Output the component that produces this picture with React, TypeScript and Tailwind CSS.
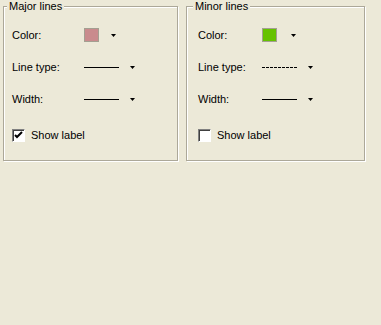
import React from "react";

type BoxProps = {
  title: string;
  width: string;
  pad: string;
  titleLeft: string;
  labelW: string;
  swatch: string;
  swatchArrowGap: string;
  dashed?: boolean;
  checked?: boolean;
};

const Arrow = () => (
  <svg width="5" height="3" viewBox="0 0 5 3" className="block">
    <polygon points="0,0 5,0 2.5,3" fill="#000" />
  </svg>
);

const LineSample = ({ dashed }: { dashed?: boolean }) => (
  <svg width="35" height="1" className="block">
    <line
      x1="0"
      y1="0.5"
      x2="35"
      y2="0.5"
      stroke="#000"
      strokeWidth="1"
      strokeDasharray={dashed ? "3 1" : undefined}
    />
  </svg>
);

const Checkbox = ({ checked }: { checked?: boolean }) => (
  <div className="w-[13px] h-[13px] bg-white border-t border-l border-[#808080] border-b border-r border-b-white border-r-white shadow-[inset_1px_1px_0_#404040] flex items-center justify-center">
    {checked && (
      <svg width="9" height="9" viewBox="0 0 9 9" className="block">
        <polyline points="1,4 3,6 8,1" fill="none" stroke="#000" strokeWidth="2" />
      </svg>
    )}
  </div>
);

const GroupBox = ({ title, width, pad, titleLeft, labelW, swatch, swatchArrowGap, dashed, checked }: BoxProps) => (
  <div
    className={`relative h-[155px] border border-[#aca899] shadow-[1px_1px_0_#fff,inset_1px_1px_0_#fff] ${width}`}
  >
    <span className={`absolute top-[-8px] bg-[#ece9d8] px-[2px] leading-[14px] ${titleLeft}`}>{title}</span>
    <div className={`pt-[12px] ${pad}`}>
      <div className="flex items-center h-8">
        <span className={labelW}>Color:</span>
        <div className="w-[15px] h-[14px] border border-[#a39f91]" style={{ backgroundColor: swatch }} />
        <div className={swatchArrowGap}>
          <Arrow />
        </div>
      </div>
      <div className="flex items-center h-8">
        <span className={labelW}>Line type:</span>
        <LineSample dashed={dashed} />
        <div className="ml-[11px]">
          <Arrow />
        </div>
      </div>
      <div className="flex items-center h-8">
        <span className={labelW}>Width:</span>
        <LineSample />
        <div className="ml-[11px]">
          <Arrow />
        </div>
      </div>
      <div className="flex items-center gap-[6px] mt-[13px] h-[14px]">
        <Checkbox checked={checked} />
        <span>Show label</span>
      </div>
    </div>
  </div>
);

export default function App() {
  return (
    <div
      className="w-[381px] h-[325px] bg-[#ece9d8] text-[11px] text-black pt-[6px] pl-[3px] flex gap-[8px]"
      style={{ fontFamily: '"Liberation Sans", Arial, sans-serif' }}
    >
      <GroupBox
        title="Major lines"
        width="w-[175px]"
        pad="pl-[8px]"
        titleLeft="left-[3px]"
        labelW="w-[72px]"
        swatch="#c98b8d"
        swatchArrowGap="ml-[12px]"
        checked
      />
      <GroupBox
        title="Minor lines"
        width="w-[179px]"
        pad="pl-[11px]"
        titleLeft="left-[6px]"
        labelW="w-[64px]"
        swatch="#66c200"
        swatchArrowGap="ml-[14px]"
        dashed
      />
    </div>
  );
}
